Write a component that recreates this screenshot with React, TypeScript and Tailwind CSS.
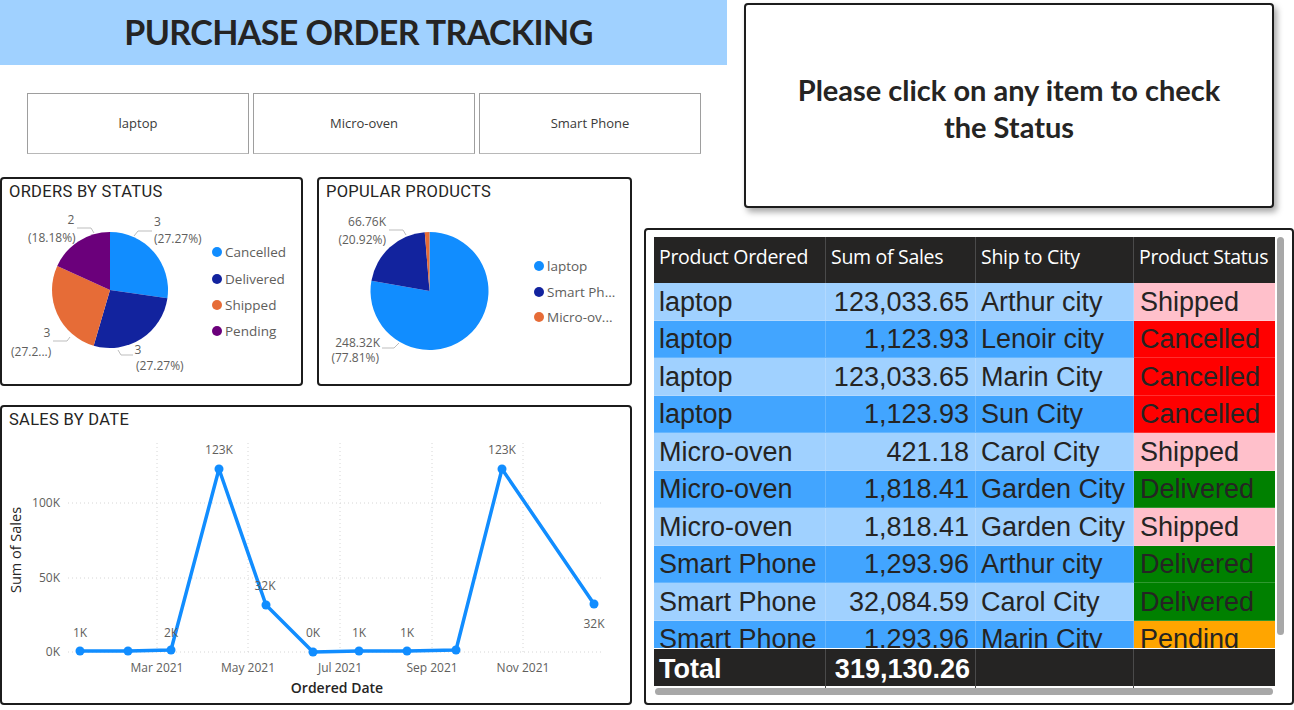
import React from "react";

const UI = "'Open Sans', 'Noto Sans', sans-serif";
const GRAY = "#605E5C";

function slice(cx: number, cy: number, r: number, a0: number, a1: number) {
  const rad = (a: number) => (a * Math.PI) / 180;
  const x0 = cx + r * Math.sin(rad(a0));
  const y0 = cy - r * Math.cos(rad(a0));
  const x1 = cx + r * Math.sin(rad(a1));
  const y1 = cy - r * Math.cos(rad(a1));
  const large = a1 - a0 > 180 ? 1 : 0;
  return `M ${cx} ${cy} L ${x0} ${y0} A ${r} ${r} 0 ${large} 1 ${x1} ${y1} Z`;
}

function Label({ x, y, lines, anchor = "start" }: { x: number; y: number; lines: string[]; anchor?: "start" | "middle" | "end" }) {
  return (
    <text x={x} y={y} fill={GRAY} fontSize={12} fontFamily={UI} textAnchor={anchor}>
      {lines.map((l, i) => (
        <tspan key={i} x={x} dy={i === 0 ? 0 : 17}>
          {l}
        </tspan>
      ))}
    </text>
  );
}

function Legend({ x, items }: { x: number; items: { y: number; c: string; t: string }[] }) {
  return (
    <g>
      {items.map((it) => (
        <g key={it.t}>
          <circle cx={x} cy={it.y} r={5} fill={it.c} />
          <text x={x + 8} y={it.y + 5} fill={GRAY} fontSize={13.5} fontFamily={UI}>
            {it.t}
          </text>
        </g>
      ))}
    </g>
  );
}

function CardTitle({ children }: { children: React.ReactNode }) {
  return (
    <div className="h-[26px] pl-[7px] pt-[2px] text-[16.5px] leading-[21px] text-[#252423] tracking-[0.3px]" style={{ fontFamily: "Roboto, 'DejaVu Sans', sans-serif" }}>
      {children}
    </div>
  );
}

function OrdersCard() {
  const c1 = "#118DFF", c2 = "#12239E", c3 = "#E66C37", c4 = "#6B007B";
  return (
    <div className="w-[303px] h-[209px] border-2 border-[#1c1c1c] rounded-[4px] bg-white">
      <CardTitle>ORDERS BY STATUS</CardTitle>
      <svg width={299} height={179}>
        <g transform="translate(-2,-205)">
          <path d={slice(110, 290, 58, 0, 98.18)} fill={c1} />
          <path d={slice(110, 290, 58, 98.18, 196.36)} fill={c2} />
          <path d={slice(110, 290, 58, 196.36, 294.55)} fill={c3} />
          <path d={slice(110, 290, 58, 294.55, 360)} fill={c4} />
          <g stroke="#bdbdbd" strokeWidth={1} fill="none">
            <polyline points="134,236 138,231 152,231" />
            <polyline points="77,228 91,228 94,233" />
            <polyline points="53,341 67,341 70,337" />
            <polyline points="118,350 121,355 133,355" />
          </g>
          <Label x={154} y={226} lines={["3", "(27.27%)"]} />
          <text x={71} y={224} fill={GRAY} fontSize={12} fontFamily={UI} textAnchor="middle">2</text>
          <text x={28} y={242} fill={GRAY} fontSize={12} fontFamily={UI}>(18.18%)</text>
          <text x={47} y={337} fill={GRAY} fontSize={12} fontFamily={UI} textAnchor="middle">3</text>
          <text x={11} y={356} fill={GRAY} fontSize={12} fontFamily={UI}>(27.2...)</text>
          <text x={138} y={354} fill={GRAY} fontSize={12} fontFamily={UI} textAnchor="middle">3</text>
          <text x={136} y={370} fill={GRAY} fontSize={12} fontFamily={UI}>(27.27%)</text>
          <Legend
            x={217}
            items={[
              { y: 252, c: c1, t: "Cancelled" },
              { y: 279, c: c2, t: "Delivered" },
              { y: 305, c: c3, t: "Shipped" },
              { y: 331, c: c4, t: "Pending" },
            ]}
          />
        </g>
      </svg>
    </div>
  );
}

function ProductsCard() {
  const c1 = "#118DFF", c2 = "#12239E", c3 = "#E66C37";
  return (
    <div className="w-[315px] h-[209px] border-2 border-[#1c1c1c] rounded-[4px] bg-white">
      <CardTitle>POPULAR PRODUCTS</CardTitle>
      <svg width={311} height={179}>
        <g transform="translate(-319,-205)">
          <path d={slice(429.5, 291, 59, 0, 280.1)} fill={c1} />
          <path d={slice(429.5, 291, 59, 280.1, 355.4)} fill={c2} />
          <path d={slice(429.5, 291, 59, 355.4, 360)} fill={c3} />
          <g stroke="#bdbdbd" strokeWidth={1} fill="none">
            <polyline points="389,230 403,230 406,235" />
            <polyline points="382,348 394,348 399,343" />
          </g>
          <text x={386} y={226} fill={GRAY} fontSize={12} fontFamily={UI} textAnchor="end">66.76K</text>
          <text x={386} y={244} fill={GRAY} fontSize={12} fontFamily={UI} textAnchor="end">(20.92%)</text>
          <text x={380} y={347} fill={GRAY} fontSize={12} fontFamily={UI} textAnchor="end">248.32K</text>
          <text x={379} y={362} fill={GRAY} fontSize={12} fontFamily={UI} textAnchor="end">(77.81%)</text>
          <Legend
            x={539}
            items={[
              { y: 266, c: c1, t: "laptop" },
              { y: 292, c: c2, t: "Smart Ph..." },
              { y: 317, c: c3, t: "Micro-ov..." },
            ]}
          />
        </g>
      </svg>
    </div>
  );
}

function SalesCard() {
  const pts: [number, number][] = [
    [80, 651], [128, 651], [171, 650], [219, 469], [266, 605], [313, 652],
    [359, 651], [407, 651], [456, 650], [502, 469], [594, 604],
  ];
  const labels: [number, number, string][] = [
    [80, 637, "1K"], [171, 637, "2K"], [219, 454, "123K"], [265, 590, "32K"],
    [313, 637, "0K"], [359, 637, "1K"], [407, 637, "1K"], [502, 454, "123K"], [594, 628, "32K"],
  ];
  const xs: [number, string][] = [[157, "Mar 2021"], [248, "May 2021"], [340, "Jul 2021"], [432, "Sep 2021"], [523, "Nov 2021"]];
  const ys: [number, string][] = [[503, "100K"], [578, "50K"], [652, "0K"]];
  return (
    <div className="mt-[19px] w-[632px] h-[300px] border-2 border-[#1c1c1c] rounded-[4px] bg-white">
      <CardTitle>SALES BY DATE</CardTitle>
      <svg width={628} height={270}>
        <g transform="translate(-2,-433)">
          <g stroke="#d6d6d6" strokeWidth={1} strokeDasharray="1 3">
            {ys.map(([y]) => (
              <line key={y} x1={68} x2={604} y1={y} y2={y} />
            ))}
            {xs.map(([x]) => (
              <line key={x} x1={x} x2={x} y1={443} y2={652} />
            ))}
          </g>
          {ys.map(([y, t]) => (
            <text key={t} x={60} y={y + 4} fill={GRAY} fontSize={12} fontFamily={UI} textAnchor="end">{t}</text>
          ))}
          {xs.map(([x, t]) => (
            <text key={t} x={x} y={672} fill={GRAY} fontSize={12} fontFamily={UI} textAnchor="middle">{t}</text>
          ))}
          <text transform="translate(21,550) rotate(-90)" fill="#252423" fontSize={14.5} fontFamily={UI} textAnchor="middle">Sum of Sales</text>
          <text x={337} y={693} fill="#252423" fontSize={14} fontWeight={600} fontFamily={UI} textAnchor="middle">Ordered Date</text>
          <polyline points={pts.map((p) => p.join(",")).join(" ")} fill="none" stroke="#118DFF" strokeWidth={3.5} strokeLinejoin="round" />
          {pts.map(([x, y], i) => (
            <circle key={i} cx={x} cy={y} r={4.5} fill="#118DFF" />
          ))}
          {labels.map(([x, y, t], i) => (
            <text key={i} x={x} y={y} fill={GRAY} fontSize={12} fontFamily={UI} textAnchor="middle">{t}</text>
          ))}
        </g>
      </svg>
    </div>
  );
}

const rows = [
  ["laptop", "123,033.65", "Arthur city", "Shipped"],
  ["laptop", "1,123.93", "Lenoir city", "Cancelled"],
  ["laptop", "123,033.65", "Marin City", "Cancelled"],
  ["laptop", "1,123.93", "Sun City", "Cancelled"],
  ["Micro-oven", "421.18", "Carol City", "Shipped"],
  ["Micro-oven", "1,818.41", "Garden City", "Delivered"],
  ["Micro-oven", "1,818.41", "Garden City", "Shipped"],
  ["Smart Phone", "1,293.96", "Arthur city", "Delivered"],
  ["Smart Phone", "32,084.59", "Carol City", "Delivered"],
  ["Smart Phone", "1,293.96", "Marin City", "Pending"],
];

const statusBg: Record<string, string> = {
  Shipped: "bg-[#FFC0CB]",
  Cancelled: "bg-[#FF0000]",
  Delivered: "bg-[#008000]",
  Pending: "bg-[#FFA500]",
};

function TableCard() {
  const cols = "grid grid-cols-[172px_150px_158px_141px]";
  return (
    <div className="ml-[12px] mt-[51px] w-[650px] h-[477px] border-2 border-[#1c1c1c] rounded-[4px] bg-white pl-[8px] pt-[7px] flex flex-col">
      <div className="flex">
        <div className="w-[621px]">
          <div className={`${cols} h-[46px] bg-[#252423] text-white text-[19.5px]`} style={{ fontFamily: "'Open Sans', 'Noto Sans', sans-serif" }}>
            {["Product Ordered", "Sum of Sales", "Ship to City", "Product Status"].map((h, i) => (
              <div key={h} className={`flex items-center pl-[5px] pb-[7px] tracking-[-0.3px] ${i < 3 ? "border-r border-[#4a4a4a]" : ""}`}>
                {h}
              </div>
            ))}
          </div>
          <div className="h-[365px] overflow-hidden" style={{ fontFamily: "'Liberation Sans', Arial, sans-serif" }}>
            {rows.map((r, i) => {
              const bg = i % 2 === 0 ? "bg-[#A0D1FF]" : "bg-[#42A5FF]";
              return (
                <div key={i} className={`${cols} h-[37.5px] text-[27px] text-[#252423] leading-none`}>
                  <div className={`${bg} flex items-center pl-[5px] pt-[2px] border-r border-b border-[#ffffff30]`}>{r[0]}</div>
                  <div className={`${bg} flex items-center justify-end pr-[6px] pt-[2px] border-r border-b border-[#ffffff30]`}>{r[1]}</div>
                  <div className={`${bg} flex items-center pl-[5px] pt-[2px] border-r border-b border-[#ffffff30]`}>{r[2]}</div>
                  <div className={`${statusBg[r[3]]} flex items-center pl-[6px] pt-[2px] border-b border-[#ffffff30]`}>{r[3]}</div>
                </div>
              );
            })}
          </div>
          <div className={`${cols} h-[39px] bg-[#252423] text-white text-[27px] font-bold border-y border-white`} style={{ fontFamily: "'Liberation Sans', Arial, sans-serif" }}>
            <div className="flex items-center pl-[5px] border-r border-[#4a4a4a]">Total</div>
            <div className="flex items-center justify-end pr-[5px] border-r border-[#4a4a4a]">319,130.26</div>
            <div className="border-r border-[#4a4a4a]" />
            <div />
          </div>
        </div>
        <div className="ml-[2px] w-[7px] h-[398px] rounded-full bg-[#A8A8A8]" />
      </div>
      <div className="mt-[1px] ml-[1px] w-[618px] h-[7px] rounded-full bg-[#A8A8A8]" />
    </div>
  );
}

export default function App() {
  return (
    <div className="w-[1294px] h-[710px] bg-white overflow-hidden flex flex-col">
      <div className="flex items-start">
        <div className="w-[727px] flex flex-col">
          <div className="h-[65px] bg-[#A0D1FF] flex items-center justify-center pb-[2px] pr-[10px]">
            <span className="text-[34px] font-bold text-[#252423] tracking-[-0.6px]" style={{ fontFamily: "Lato, 'Open Sans', sans-serif" }}>
              PURCHASE ORDER TRACKING
            </span>
          </div>
          <div className="mt-[28px] pl-[27px] flex gap-[4px]">
            {["laptop", "Micro-oven", "Smart Phone"].map((t) => (
              <div key={t} className="w-[222px] h-[61px] border border-[#9e9e9e] border-b-[#b8b8b8] flex items-center justify-center text-[13px] text-[#3a3a3a]" style={{ fontFamily: UI }}>
                {t}
              </div>
            ))}
          </div>
        </div>
        <div className="ml-[17px] mt-[3px] w-[530px] h-[205px] border-2 border-[#1c1c1c] rounded-[4px] bg-white shadow-[3px_4px_6px_rgba(0,0,0,0.35)] flex items-center justify-center pt-[4px]">
          <div className="text-center text-[29px] leading-[37px] font-bold text-[#252423]" style={{ fontFamily: "Lato, 'Open Sans', sans-serif" }}>
            Please click on any item to check
            <br />
            the Status
          </div>
        </div>
      </div>
      <div className="flex items-start mt-[-31px]">
        <div className="w-[632px] flex flex-col">
          <div className="flex gap-[14px]">
            <OrdersCard />
            <ProductsCard />
          </div>
          <SalesCard />
        </div>
        <TableCard />
      </div>
    </div>
  );
}
